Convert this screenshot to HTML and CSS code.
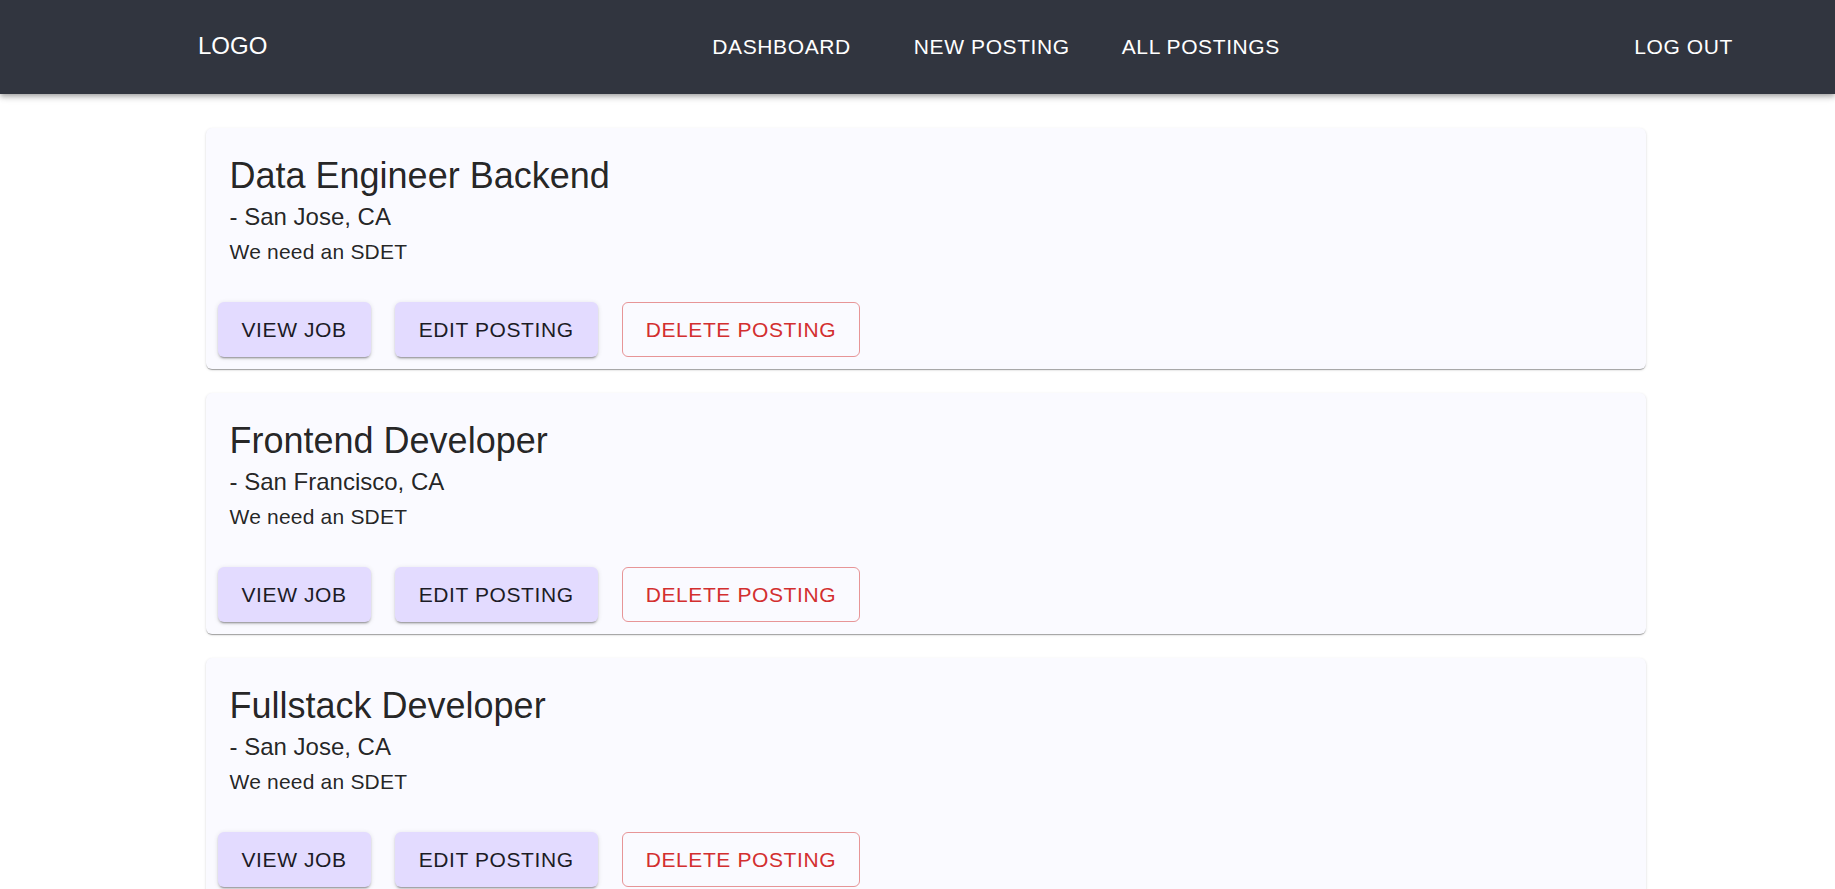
FILE: index.html
```html
<!DOCTYPE html>
<html lang="en">
<head>
<meta charset="utf-8">
<title>Postings</title>
<link rel="stylesheet" href="styles.css">
</head>
<body>
<header class="appbar">
  <div class="logo">LOGO</div>
  <nav class="nav">
    <a class="nav-link nav-first" href="#">DASHBOARD</a>
    <a class="nav-link" href="#">NEW POSTING</a>
    <a class="nav-link" href="#">ALL POSTINGS</a>
  </nav>
  <a class="nav-link logout" href="#">LOG OUT</a>
</header>
<main class="main">
  <div class="list">
    <section class="card">
      <div class="card-content">
        <h2 class="title">Data Engineer Backend</h2>
        <p class="location">- San Jose, CA</p>
        <p class="desc">We need an SDET</p>
      </div>
      <div class="card-actions">
        <button class="btn btn-filled">VIEW JOB</button>
        <button class="btn btn-filled">EDIT POSTING</button>
        <button class="btn btn-outlined">DELETE POSTING</button>
      </div>
    </section>
    <section class="card">
      <div class="card-content">
        <h2 class="title">Frontend Developer</h2>
        <p class="location">- San Francisco, CA</p>
        <p class="desc">We need an SDET</p>
      </div>
      <div class="card-actions">
        <button class="btn btn-filled">VIEW JOB</button>
        <button class="btn btn-filled">EDIT POSTING</button>
        <button class="btn btn-outlined">DELETE POSTING</button>
      </div>
    </section>
    <section class="card">
      <div class="card-content">
        <h2 class="title">Fullstack Developer</h2>
        <p class="location">- San Jose, CA</p>
        <p class="desc">We need an SDET</p>
      </div>
      <div class="card-actions">
        <button class="btn btn-filled">VIEW JOB</button>
        <button class="btn btn-filled">EDIT POSTING</button>
        <button class="btn btn-outlined">DELETE POSTING</button>
      </div>
    </section>
  </div>
</main>
</body>
</html>
```
FILE: styles.css
```css
* { box-sizing: border-box; }
html, body { margin: 0; padding: 0; background: #ffffff; }
body {
  font-family: "Liberation Sans", Arial, sans-serif;
  color: rgba(0, 0, 0, 0.87);
}
.appbar {
  position: relative;
  z-index: 2;
  height: 94px;
  background: #31353f;
  display: flex;
  align-items: center;
  padding: 0 102px 2px 198px;
  box-shadow: 0 2px 4px -1px rgba(0,0,0,0.2), 0 4px 5px 0 rgba(0,0,0,0.14), 0 1px 10px 0 rgba(0,0,0,0.12);
}
.logo {
  color: #ffffff;
  font-size: 24px;
  line-height: 1;
}
.nav {
  display: flex;
  align-items: center;
  gap: 52px;
  margin-left: 445px;
}
.nav-link {
  color: #ffffff;
  text-decoration: none;
  font-size: 21px;
  letter-spacing: 0.6px;
  line-height: 1;
}
.nav-first { margin-right: 11px; }
.logout { margin-left: auto; }
.main {
  padding: 34px 0 40px 16px;
}
.list {
  width: 1440px;
  margin: 0 auto;
  display: flex;
  flex-direction: column;
  gap: 24px;
}
.card {
  background: #fafaff;
  border-radius: 6px;
  box-shadow: 0 2px 1px -1px rgba(0,0,0,0.2), 0 1px 1px 0 rgba(0,0,0,0.14), 0 1px 3px 0 rgba(0,0,0,0.12);
}
.card-content {
  padding: 26px 24px 23px 24px;
}
.title {
  margin: 0;
  font-weight: 400;
  font-size: 36px;
  line-height: 1.235;
}
.location {
  margin: 0;
  font-size: 24px;
  line-height: 1.6;
}
.desc {
  margin: 0;
  font-size: 21px;
  line-height: 30px;
  letter-spacing: 0.2px;
}
.card-actions {
  display: flex;
  gap: 24px;
  padding: 12px;
}
.btn {
  font-family: "Liberation Sans", Arial, sans-serif;
  font-size: 21px;
  letter-spacing: 0.6px;
  height: 55px;
  padding: 0 23px;
  border-radius: 6px;
  cursor: pointer;
  line-height: 1;
}
.btn-filled {
  background: #e3dbff;
  color: #1c1b26;
  border: none;
  padding: 0 24px;
  box-shadow: 0 3px 1px -2px rgba(0,0,0,0.2), 0 2px 2px 0 rgba(0,0,0,0.14), 0 1px 5px 0 rgba(0,0,0,0.12);
}
.btn-outlined {
  background: transparent;
  color: #d32f2f;
  border: 1px solid rgba(211, 47, 47, 0.5);
}
```
